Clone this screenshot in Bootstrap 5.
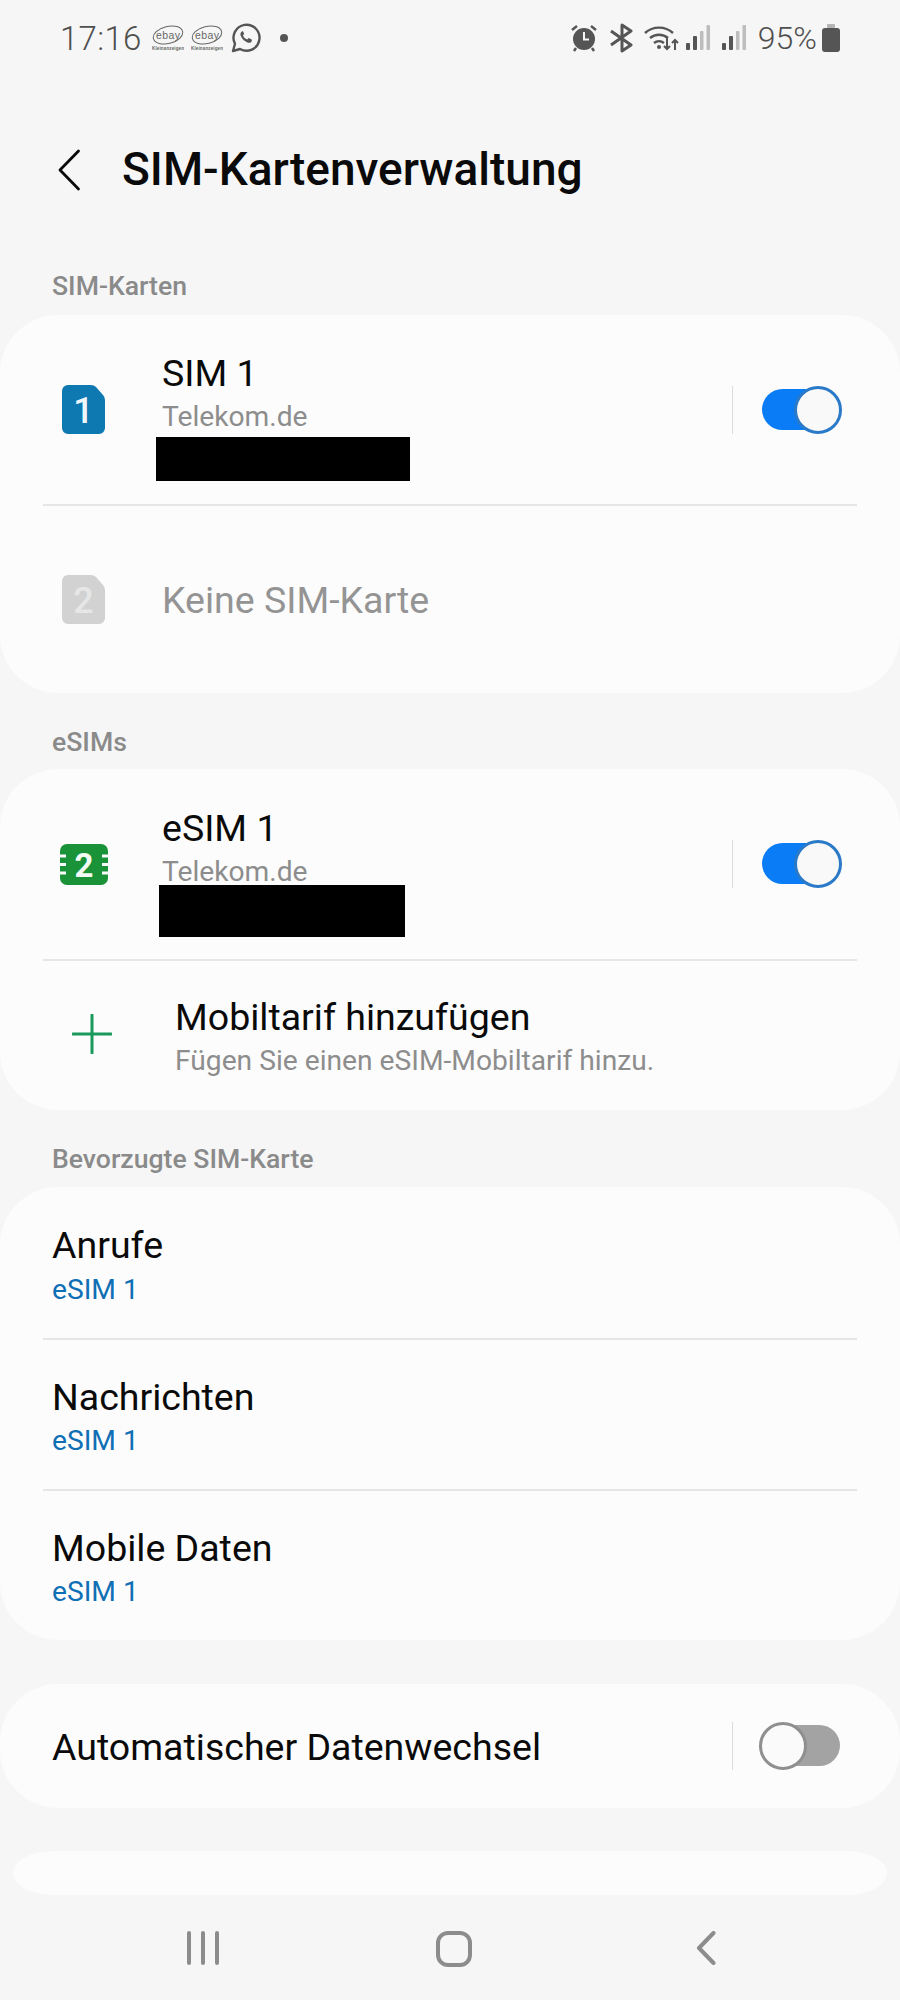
<!DOCTYPE html>
<html lang="de">
<head>
<meta charset="utf-8">
<title>SIM-Kartenverwaltung</title>
<link rel="stylesheet" href="https://cdn.jsdelivr.net/npm/bootstrap@5.3.0/dist/css/bootstrap.min.css">
<style>
html,body{margin:0;background:#f6f6f6}
.phone{width:900px;height:2000px;overflow:hidden;background:#f6f6f6;font-family:Roboto,"Liberation Sans",sans-serif;color:#0a0a0a;display:flex;flex-direction:column}
.status{height:76px;padding:0 60px;color:#4f4f4f;flex:none}
.clock{font-size:33px;font-weight:300;letter-spacing:.3px;line-height:1}
.pct{font-size:32px;font-weight:300;line-height:1}
.head{height:94px;margin-top:47px;padding-left:57px;gap:41px;flex:none}
.head h1{font-size:46px;font-weight:500;margin:0;color:#0a0a0a}
.lbl{height:30px;line-height:30px;margin:0 0 14px 52px;font-size:26.6px;font-weight:500;color:#8a8a8a;flex:none}
.group{background:#fcfcfc;border-radius:58px;flex:none}
.rule{height:2px;background:#e6e6e6;margin:0 43px}
.t{font-size:37.5px;line-height:44px;color:#0a0a0a}
.s{font-size:28.2px;line-height:36px;color:#8d8d8d}
.lnk{font-size:28.2px;line-height:36px;color:#0f6fb5}
.mute{color:#949494}
.blk{background:#000;display:block}
.ic{flex:none;display:block}
.vsep{width:1px;height:48px;background:#dcdcdc;flex:none}
.sw{width:80px;height:48px;position:relative;flex:none;margin-left:28px}
.sw::before{content:"";position:absolute;left:1px;top:3px;right:1px;height:41px;border-radius:21px;background:#0a7cf5}
.sw::after{content:"";position:absolute;right:-1px;top:0;width:48px;height:48px;border-radius:50%;background:#f9f9f9;border:3px solid #2a7ac8}
.sw.off::before{background:#a3a3a3}
.sw.off::after{right:auto;left:-2px;border-color:#8f8f8f;background:#fafafa}
.stub{height:44px;margin:43px 13px 0;background:#fcfcfc;border-radius:40px/22px;flex:none}
.navbot{flex:1;padding-top:36px}
.row-a{padding:0 59px 0 62px}
</style>
</head>
<body>
<div class="phone">
  <div class="status d-flex align-items-center justify-content-between">
    <div class="d-flex align-items-center">
      <span class="clock">17:16</span>
      <svg class="ic" style="margin-left:10px" width="32" height="26" viewBox="0 0 32 26"><ellipse cx="16" cy="10" rx="15" ry="8.5" transform="rotate(-14 16 10)" fill="none" stroke="#666" stroke-width="1"/><text x="4" y="13.500" font-size="10.500" fill="#666" font-family="Liberation Sans" textLength="24">ebay</text><text x="0" y="25" font-size="4.500" font-weight="700" fill="#666" font-family="Liberation Sans" textLength="32">Kleinanzeigen</text></svg>
      <svg class="ic" style="margin-left:7px" width="32" height="26" viewBox="0 0 32 26"><ellipse cx="16" cy="10" rx="15" ry="8.5" transform="rotate(-14 16 10)" fill="none" stroke="#666" stroke-width="1"/><text x="4" y="13.500" font-size="10.500" fill="#666" font-family="Liberation Sans" textLength="24">ebay</text><text x="0" y="25" font-size="4.500" font-weight="700" fill="#666" font-family="Liberation Sans" textLength="32">Kleinanzeigen</text></svg>
      <svg class="ic" style="margin-left:8px" width="30" height="30" viewBox="0 0 30 30"><path d="M2 28l2-7.200A13 13 0 1 1 9 26z" fill="none" stroke="#555" stroke-width="2.400" stroke-linejoin="round"/><path d="M11 8.500c-1.600 1-2 2.600-1.200 4.600 1.300 3 3.600 5.200 6.600 6.400 2 .7 3.700 0 4.500-1.600l-.2-1.300-3-1.500-1.600 1.500c-1.800-.8-3.300-2.300-4.200-4.100l1.300-1.500-1.300-3z" fill="#555"/></svg>
      <svg class="ic" style="margin-left:19px" width="8" height="8" viewBox="0 0 8 8"><circle cx="4" cy="4" r="4" fill="#555"/></svg>
    </div>
    <div class="d-flex align-items-center">
      <svg class="ic" width="26" height="28" viewBox="0 0 26 28"><circle cx="13" cy="15" r="11" fill="#555"/><path d="M13 8v7.500h5" fill="none" stroke="#f6f6f6" stroke-width="2"/><path d="M1 6l5-4M25 6l-5-4M5 24l-2 3M21 24l2 3" stroke="#555" stroke-width="2.500" fill="none"/></svg>
      <svg class="ic" style="margin-left:12px" width="26" height="30" viewBox="0 0 26 30"><path d="M2 8l20 14-9 6V2l9 6L2 22" fill="none" stroke="#555" stroke-width="3" stroke-linejoin="round"/></svg>
      <svg class="ic" style="margin-left:9px" width="35" height="28" viewBox="0 0 35 28"><path d="M1 9a21 21 0 0 1 28 0M6 14a14 14 0 0 1 18 0M10 19a8 8 0 0 1 10 0" fill="none" stroke="#555" stroke-width="2.400"/><circle cx="15" cy="23" r="2" fill="#555"/><path d="M23 14v11m-3-3l3 3 3-3M31 26V16m-3 3l3-3 3 3" fill="none" stroke="#555" stroke-width="2"/></svg>
      <svg class="ic" style="margin-left:7px" width="24" height="26" viewBox="0 0 24 26"><rect x="0" y="18" width="4" height="7" rx="1" fill="#555"/><rect x="7" y="11" width="4" height="14" rx="1" fill="#555"/><rect x="14" y="6" width="3.500" height="19" rx="1" fill="#bdbdbd"/><rect x="20.500" y="0" width="3.500" height="25" rx="1" fill="#bdbdbd"/></svg>
      <svg class="ic" style="margin-left:12px" width="24" height="26" viewBox="0 0 24 26"><rect x="0" y="18" width="4" height="7" rx="1" fill="#555"/><rect x="7" y="11" width="4" height="14" rx="1" fill="#555"/><rect x="14" y="6" width="3.500" height="19" rx="1" fill="#bdbdbd"/><rect x="20.500" y="0" width="3.500" height="25" rx="1" fill="#bdbdbd"/></svg>
      <span class="pct" style="margin-left:12px">95%</span>
      <svg class="ic" style="margin-left:5px" width="18" height="28" viewBox="0 0 18 28"><rect x="5" y="0" width="8" height="4" rx="1" fill="#b5b5b5"/><rect x="0" y="4" width="18" height="24" rx="3" fill="#555"/></svg>
    </div>
  </div>

  <div class="head d-flex align-items-center">
    <svg class="ic" width="24" height="42" viewBox="0 0 24 42"><path d="M21.500 2L3 21l18.500 19" fill="none" stroke="#0a0a0a" stroke-width="2.800" stroke-linecap="round" stroke-linejoin="round"/></svg>
    <h1>SIM-Kartenverwaltung</h1>
  </div>

  <div class="lbl" style="margin-top:54px">SIM-Karten</div>
  <div class="group">
    <div class="d-flex align-items-center row-a" style="height:189px">
      <svg class="ic align-self-start" style="margin-top:70px" width="43" height="49" viewBox="0 0 43 49"><path d="M6 0h23q3 0 5 2l7 8q2 2 2 5v28a6 6 0 0 1-6 6H6a6 6 0 0 1-6-6V6a6 6 0 0 1 6-6z" fill="#0e78b0"/><text x="21.500" y="38" font-size="36" font-weight="500" text-anchor="middle" fill="#eef6fa" font-family="Roboto">1</text></svg>
      <div class="flex-grow-1 align-self-start" style="padding:36px 0 0 57px">
        <div class="t">SIM 1</div>
        <div class="s" style="margin-top:4px">Telekom.de</div>
        <span class="blk" style="width:254px;height:44px;margin:2px 0 0 -6px"></span>
      </div>
      <span class="vsep"></span><span class="sw"></span>
    </div>
    <div class="rule"></div>
    <div class="d-flex align-items-center" style="height:187px;padding-left:62px">
      <svg class="ic" width="43" height="49" viewBox="0 0 43 49"><path d="M6 0h23q3 0 5 2l7 8q2 2 2 5v28a6 6 0 0 1-6 6H6a6 6 0 0 1-6-6V6a6 6 0 0 1 6-6z" fill="#d2d2d2"/><text x="21.500" y="38" font-size="36" font-weight="500" text-anchor="middle" fill="#e6e6e6" font-family="Roboto">2</text></svg>
      <div class="t mute" style="margin-left:57px">Keine SIM-Karte</div>
    </div>
  </div>

  <div class="lbl" style="margin-top:34px">eSIMs</div>
  <div class="group" style="margin-top:-2px">
    <div class="d-flex align-items-center" style="height:190px;padding:0 59px 0 60px">
      <svg class="ic align-self-start" style="margin-top:75px" width="48" height="41" viewBox="0 0 48 41"><rect x="0" y="0" width="48" height="41" rx="7" fill="#1a9238"/><path d="M0 12h6M0 20.500h6M0 29h6M42 12h6M42 20.500h6M42 29h6" stroke="#fcfcfc" stroke-width="3"/><text x="24" y="33" font-size="33" font-weight="700" text-anchor="middle" fill="#f2fbf4" font-family="Roboto">2</text></svg>
      <div class="flex-grow-1 align-self-start" style="padding:37px 0 0 54px">
        <div class="t">eSIM 1</div>
        <div class="s" style="margin-top:4px">Telekom.de</div>
        <span class="blk" style="width:246px;height:52px;margin:-5px 0 0 -3px;position:relative"></span>
      </div>
      <span class="vsep"></span><span class="sw"></span>
    </div>
    <div class="rule"></div>
    <div class="d-flex" style="height:149px;padding-left:72px">
      <svg class="ic" style="margin-top:53px" width="40" height="40" viewBox="0 0 40 40"><path d="M20 1v38M1 20h38" stroke="#1a9a5a" stroke-width="3" stroke-linecap="round"/></svg>
      <div style="padding:34px 0 0 63px">
        <div class="t">Mobiltarif hinzufügen</div>
        <div class="s" style="margin-top:4px">Fügen Sie einen eSIM-Mobiltarif hinzu.</div>
      </div>
    </div>
  </div>

  <div class="lbl" style="margin-top:34px">Bevorzugte SIM-Karte</div>
  <div class="group" style="margin-top:-1px">
    <div style="height:151px;padding:36px 52px 0">
      <div class="t">Anrufe</div><div class="lnk" style="margin-top:5px">eSIM 1</div>
    </div>
    <div class="rule"></div>
    <div style="height:149px;padding:35px 52px 0">
      <div class="t">Nachrichten</div><div class="lnk" style="margin-top:4px">eSIM 1</div>
    </div>
    <div class="rule"></div>
    <div style="height:149px;padding:35px 52px 0">
      <div class="t">Mobile Daten</div><div class="lnk" style="margin-top:4px">eSIM 1</div>
    </div>
  </div>

  <div class="group d-flex align-items-center" style="margin-top:44px;height:124px;padding:0 59px 0 52px">
    <div class="t flex-grow-1" style="padding-top:1px">Automatischer Datenwechsel</div>
    <span class="vsep"></span><span class="sw off"></span>
  </div>

  <div class="stub"></div>

  <div class="navbot d-flex">
    <svg class="ic" style="margin-left:187px" width="32" height="34" viewBox="0 0 32 34"><path d="M2 2v30M16 2v30M30 2v30" stroke="#8c8c8c" stroke-width="4" stroke-linecap="round"/></svg>
    <svg class="ic" style="margin-left:217px" width="36" height="36" viewBox="0 0 36 36"><rect x="2" y="2" width="32" height="32" rx="10" fill="none" stroke="#8c8c8c" stroke-width="4"/></svg>
    <svg class="ic" style="margin-left:224px" width="20" height="34" viewBox="0 0 20 34"><path d="M17.500 2L3 17l14.500 15" fill="none" stroke="#8c8c8c" stroke-width="4" stroke-linecap="round" stroke-linejoin="round"/></svg>
  </div>
</div>
<script src="https://cdn.jsdelivr.net/npm/bootstrap@5.3.0/dist/js/bootstrap.bundle.min.js"></script>
</body>
</html>
